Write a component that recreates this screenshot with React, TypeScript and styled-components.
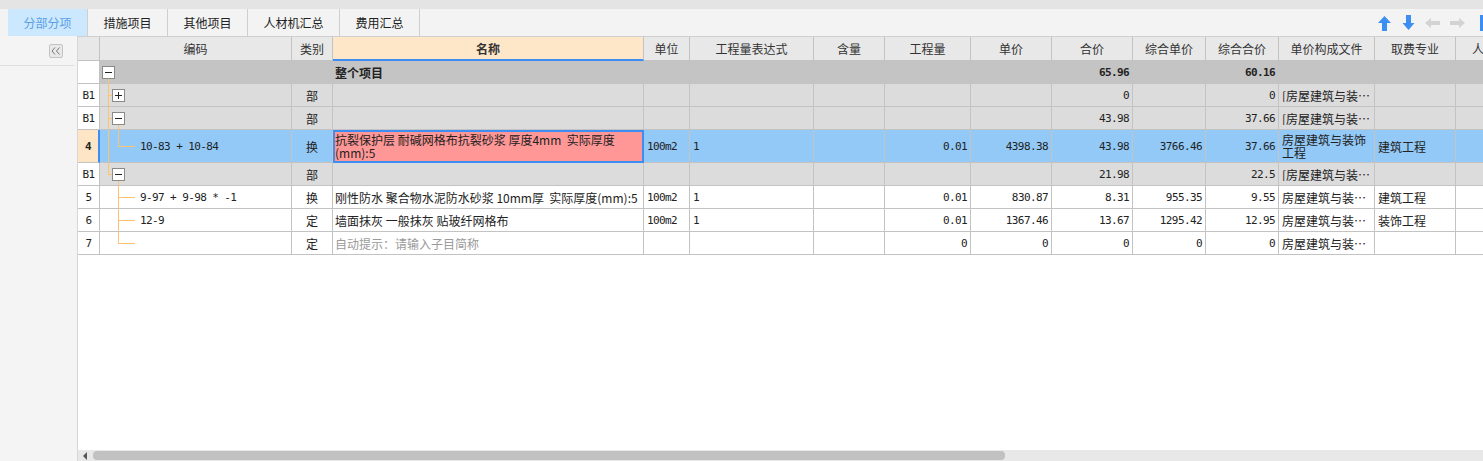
import React from 'react';
import styled, { createGlobalStyle, css } from 'styled-components';

const LINE = '#c3c3c3';
const BLUE = '#3d8ef2';
const TREE = '#ffc36e';

type Align = 'left' | 'center' | 'right';
type Kind = 'root' | 'group' | 'selected' | 'item';
type Seg = 'full' | 'top' | 'bottom';

interface Tree {
  l1?: Seg;
  box1?: '+' | '-';
  stub?: boolean;
  box2?: '+' | '-';
  l2?: Seg;
  leaf?: boolean;
}

interface RowData {
  kind: Kind;
  h: number;
  no: string;
  tree: Tree;
  code: string;
  type: string;
  name: string[];
  hint?: boolean;
  unit: string;
  expr: string;
  qty: string;
  price: string;
  total: string;
  uprice: string;
  utotal: string;
  file: string;
  major: string;
}

const COLUMNS = [
  { title: '', width: 22 },
  { title: '编码', width: 192 },
  { title: '类别', width: 41 },
  { title: '名称', width: 311, focus: true },
  { title: '单位', width: 46 },
  { title: '工程量表达式', width: 124 },
  { title: '含量', width: 71 },
  { title: '工程量', width: 86 },
  { title: '单价', width: 81 },
  { title: '合价', width: 81 },
  { title: '综合单价', width: 73 },
  { title: '综合合价', width: 73 },
  { title: '单价构成文件', width: 96 },
  { title: '取费专业', width: 81 },
  { title: '人工单价', width: 81 },
];

const TEMPLATE = COLUMNS.map(c => `${c.width}px`).join(' ');

const FILE = '房屋建筑与装饰工程';

const ROWS: RowData[] = [
  {
    kind: 'root', h: 23, no: '', tree: { box1: '-', l1: 'bottom' }, code: '', type: '',
    name: ['整个项目'], unit: '', expr: '', qty: '', price: '', total: '65.96', uprice: '', utotal: '60.16',
    file: '', major: '',
  },
  {
    kind: 'group', h: 23, no: 'B1', tree: { l1: 'full', stub: true, box2: '+' }, code: '', type: '部',
    name: [''], unit: '', expr: '', qty: '', price: '', total: '0', uprice: '', utotal: '0',
    file: `[${FILE}]`, major: '',
  },
  {
    kind: 'group', h: 23, no: 'B1', tree: { l1: 'full', stub: true, box2: '-', l2: 'bottom' }, code: '', type: '部',
    name: [''], unit: '', expr: '', qty: '', price: '', total: '43.98', uprice: '', utotal: '37.66',
    file: `[${FILE}]`, major: '',
  },
  {
    kind: 'selected', h: 33, no: '4', tree: { l1: 'full', l2: 'top', leaf: true }, code: '10-83 + 10-84', type: '换',
    name: ['抗裂保护层 耐碱网格布抗裂砂浆 厚度4mm  实际厚度', '(mm):5'], unit: '100m2', expr: '1', qty: '0.01',
    price: '4398.38', total: '43.98', uprice: '3766.46', utotal: '37.66', file: FILE, major: '建筑工程',
  },
  {
    kind: 'group', h: 23, no: 'B1', tree: { l1: 'top', stub: true, box2: '-', l2: 'bottom' }, code: '', type: '部',
    name: [''], unit: '', expr: '', qty: '', price: '', total: '21.98', uprice: '', utotal: '22.5',
    file: `[${FILE}]`, major: '',
  },
  {
    kind: 'item', h: 23, no: '5', tree: { l2: 'full', leaf: true }, code: '9-97 + 9-98 * -1', type: '换',
    name: ['刚性防水 聚合物水泥防水砂浆 10mm厚  实际厚度(mm):5'], unit: '100m2', expr: '1', qty: '0.01',
    price: '830.87', total: '8.31', uprice: '955.35', utotal: '9.55', file: FILE, major: '建筑工程',
  },
  {
    kind: 'item', h: 23, no: '6', tree: { l2: 'full', leaf: true }, code: '12-9', type: '定',
    name: ['墙面抹灰 一般抹灰 贴玻纤网格布'], unit: '100m2', expr: '1', qty: '0.01',
    price: '1367.46', total: '13.67', uprice: '1295.42', utotal: '12.95', file: FILE, major: '装饰工程',
  },
  {
    kind: 'item', h: 23, no: '7', tree: { l2: 'top', leaf: true }, code: '', type: '定',
    name: ['自动提示：请输入子目简称'], hint: true, unit: '', expr: '', qty: '0',
    price: '0', total: '0', uprice: '0', utotal: '0', file: FILE, major: '',
  },
];

const GlobalStyle = createGlobalStyle`
  html, body {
    margin: 0;
    padding: 0;
    background: #fff;
  }
  body {
    font-family: "Noto Sans CJK SC", "Noto Sans", sans-serif;
    font-size: 12px;
    color: #222;
  }
`;

const Shell = styled.div`
  width: 1483px;
  height: 461px;
  display: flex;
  flex-direction: column;
  overflow: hidden;
`;

const TopStrip = styled.div`
  height: 9px;
  flex-shrink: 0;
  background: #e4e4e4;
`;

const TabBar = styled.div`
  height: 27px;
  flex-shrink: 0;
  display: flex;
  align-items: stretch;
  padding-left: 8px;
  background: #f3f3f3;
  overflow: hidden;
`;

const Tab = styled.div<{ $active?: boolean; $w: number }>`
  width: ${p => p.$w}px;
  box-sizing: border-box;
  border-right: 1px solid #cfcfcf;
  display: flex;
  align-items: center;
  justify-content: center;
  font-size: 12px;
  color: ${p => (p.$active ? '#5a9fe6' : '#222')};
  background: ${p => (p.$active ? '#cce8ff' : 'transparent')};
`;

const ArrowGroup = styled.div`
  margin-left: auto;
  margin-right: -6px;
  display: flex;
  align-items: center;
  gap: 8px;
  flex-shrink: 0;
`;

const Body = styled.div`
  flex: 1;
  min-height: 0;
  display: flex;
`;

const SidePanel = styled.div`
  width: 78px;
  flex-shrink: 0;
  box-sizing: border-box;
  border-right: 1px solid #d6d6d6;
  background: #f4f4f4;
`;

const PanelHead = styled.div`
  height: 30px;
  box-sizing: border-box;
  margin-right: 3px;
  padding: 8px 11px 0 0;
  border-bottom: 1px solid #dedede;
  display: flex;
  justify-content: flex-end;
  align-items: flex-start;
`;

const CollapseButton = styled.div`
  width: 14px;
  height: 14px;
  box-sizing: border-box;
  border: 1px solid #c4c4c4;
  border-radius: 2px;
  background: #e9e9e9;
  display: flex;
  align-items: center;
  justify-content: center;
`;

const Main = styled.div`
  flex: 1;
  min-width: 0;
  display: flex;
  flex-direction: column;
`;

const GridViewport = styled.div`
  flex: 1;
  min-height: 0;
  overflow: hidden;
  background: #fff;
`;

const Grid = styled.div`
  width: max-content;
`;

const ROW_BG: Record<Kind, string> = {
  root: '#c4c4c4',
  group: '#dcdcdc',
  selected: '#92c9f7',
  item: '#fff',
};

const Row = styled.div<{ $h: number; $kind: Kind }>`
  display: grid;
  grid-template-columns: ${TEMPLATE};
  height: ${p => p.$h}px;
  background: ${p => ROW_BG[p.$kind]};
`;

const HeaderRow = styled.div`
  display: grid;
  grid-template-columns: ${TEMPLATE};
  height: 25px;
  box-sizing: border-box;
  border-top: 1px solid #cfcfcf;
  background: #e8e8e8;
`;

const HeaderCell = styled.div<{ $focus?: boolean }>`
  box-sizing: border-box;
  border-right: 1px solid ${LINE};
  border-bottom: ${p => (p.$focus ? `2px solid ${BLUE}` : `1px solid ${LINE}`)};
  background: ${p => (p.$focus ? '#fee6c8' : '#e8e8e8')};
  display: flex;
  align-items: center;
  justify-content: center;
  white-space: nowrap;
  overflow: hidden;
  font-size: 12px;
  font-weight: ${p => (p.$focus ? 700 : 400)};
  color: #333;
`;

const monoFont = css`
  font-family: "DejaVu Sans Mono", "Noto Sans CJK SC", monospace;
  font-size: 11px;
  letter-spacing: -0.6px;
`;

const Cell = styled.div<{ $align?: Align; $mono?: boolean; $bold?: boolean; $muted?: boolean; $wrap?: boolean }>`
  box-sizing: border-box;
  min-width: 0;
  border-right: 1px solid ${LINE};
  border-bottom: 1px solid ${LINE};
  padding: 0 3px;
  display: flex;
  align-items: center;
  justify-content: ${p => (p.$align === 'right' ? 'flex-end' : p.$align === 'center' ? 'center' : 'flex-start')};
  overflow: hidden;
  white-space: ${p => (p.$wrap ? 'normal' : 'pre')};
  line-height: 13px;
  font-size: 12px;
  font-weight: ${p => (p.$bold ? 700 : 400)};
  color: ${p => (p.$muted ? '#9a9a9a' : '#222')};
  ${p => p.$mono && monoFont}
`;

const RowNum = styled(Cell)<{ $selected?: boolean }>`
  padding: 0;
  background: ${p => (p.$selected ? '#fde5c6' : '#fff')};
  border-right: ${p => (p.$selected ? `2px solid ${BLUE}` : `1px solid ${LINE}`)};
`;

const CodeCell = styled(Cell)`
  padding: 0;
`;

const CodeText = styled.span`
  ${monoFont}
  white-space: pre;
`;

const NameCell = styled(Cell)<{ $focused?: boolean }>`
  padding: 0 2px;
  ${p =>
    p.$focused &&
    css`
      background: #ff9797;
      outline: 2px solid ${BLUE};
      outline-offset: -2px;
    `}
`;

const Ellip = styled.span`
  display: block;
  min-width: 0;
  overflow: hidden;
  text-overflow: ellipsis;
  white-space: nowrap;
`;

const Scrollbar = styled.div`
  height: 11px;
  flex-shrink: 0;
  display: flex;
  align-items: center;
  background: #e8e8e8;
`;

const ScrollThumb = styled.div`
  width: 912px;
  height: 9px;
  margin-left: 6px;
  border-radius: 4px;
  background: #c1c1c1;
`;

function UpArrow() {
  return (
    <svg width="16" height="16" viewBox="0 0 16 16">
      <path d="M1 8 L7.5 1 L14 8 L10 8 L10 16 L5 16 L5 8 Z" fill={BLUE} />
    </svg>
  );
}

function DownArrow() {
  return (
    <svg width="16" height="16" viewBox="0 0 16 16">
      <path d="M5 0 L10 0 L10 8 L13.5 8 L7.5 15 L1.5 8 L5 8 Z" fill={BLUE} />
    </svg>
  );
}

function SideArrow({ dir }: { dir: 'left' | 'right' }) {
  return (
    <svg width="16" height="16" viewBox="0 0 16 16" style={dir === 'right' ? { transform: 'scaleX(-1)' } : undefined}>
      <path d="M0 8 L6 3 L6 6 L15 6 L15 10 L6 10 L6 13 Z" fill="#d3d3d3" />
    </svg>
  );
}

function EdgeIcon() {
  return (
    <svg width="16" height="16" viewBox="0 0 16 16">
      <rect x="7" y="0" width="9" height="16" fill={BLUE} />
    </svg>
  );
}

function Expander({ x, c, sign }: { x: number; c: number; sign: '+' | '-' }) {
  return (
    <g>
      <rect x={x + 0.5} y={c - 5.5} width={12} height={12} fill="#fff" stroke="#8a8a8a" />
      <line x1={x + 3} x2={x + 10} y1={c + 0.5} y2={c + 0.5} stroke="#222" />
      {sign === '+' && <line x1={x + 6.5} x2={x + 6.5} y1={c - 3} y2={c + 4} stroke="#222" />}
    </g>
  );
}

function vertical(x: number, seg: Seg | undefined, c: number, h: number) {
  if (!seg) return null;
  const y1 = seg === 'bottom' ? c + 7 : 0;
  const y2 = seg === 'top' ? c + 1 : h;
  return <line x1={x} x2={x} y1={y1} y2={y2} stroke={TREE} />;
}

function TreeGutter({ h, tree }: { h: number; tree: Tree }) {
  const c = Math.floor(h / 2);
  return (
    <svg width="40" height={h} style={{ flexShrink: 0, display: 'block' }}>
      {vertical(8.5, tree.l1, c, h)}
      {vertical(18.5, tree.l2, c, h)}
      {tree.stub && <line x1={9} x2={12} y1={c + 0.5} y2={c + 0.5} stroke={TREE} />}
      {tree.leaf && <line x1={19} x2={35} y1={c + 0.5} y2={c + 0.5} stroke={TREE} />}
      {tree.box1 && <Expander x={2} c={c} sign={tree.box1} />}
      {tree.box2 && <Expander x={12} c={c} sign={tree.box2} />}
    </svg>
  );
}

export default function App() {
  const tabs = [
    { text: '分部分项', w: 80 },
    { text: '措施项目', w: 80 },
    { text: '其他项目', w: 80 },
    { text: '人材机汇总', w: 92 },
    { text: '费用汇总', w: 80 },
  ];

  return (
    <Shell>
      <GlobalStyle />
      <TopStrip />
      <TabBar>
        {tabs.map((t, i) => (
          <Tab key={t.text} $w={t.w} $active={i === 0}>
            {t.text}
          </Tab>
        ))}
        <ArrowGroup>
          <UpArrow />
          <DownArrow />
          <SideArrow dir="left" />
          <SideArrow dir="right" />
          <EdgeIcon />
        </ArrowGroup>
      </TabBar>
      <Body>
        <SidePanel>
          <PanelHead>
            <CollapseButton>
              <svg width="10" height="8" viewBox="0 0 10 8">
                <path d="M4 0.5 L1 4 L4 7.5 M8.5 0.5 L5.5 4 L8.5 7.5" fill="none" stroke="#777" />
              </svg>
            </CollapseButton>
          </PanelHead>
        </SidePanel>
        <Main>
          <GridViewport>
            <Grid>
              <HeaderRow>
                {COLUMNS.map((col, i) => (
                  <HeaderCell key={i} $focus={col.focus}>
                    {col.title}
                  </HeaderCell>
                ))}
              </HeaderRow>
              {ROWS.map((r, i) => {
                const selected = r.kind === 'selected';
                const root = r.kind === 'root';
                return (
                  <Row key={i} $h={r.h} $kind={r.kind}>
                    <RowNum $selected={selected} $bold={selected} $mono $align="center">
                      {r.no}
                    </RowNum>
                    <CodeCell>
                      <TreeGutter h={r.h - 1} tree={r.tree} />
                      <CodeText>{r.code}</CodeText>
                    </CodeCell>
                    <Cell $align="center">{r.type}</Cell>
                    <NameCell $focused={selected} $bold={root} $muted={r.hint}>
                      <span>
                        {r.name.map((line, j) => (
                          <React.Fragment key={j}>
                            {j > 0 && <br />}
                            {line}
                          </React.Fragment>
                        ))}
                      </span>
                    </NameCell>
                    <Cell $mono>{r.unit}</Cell>
                    <Cell $mono>{r.expr}</Cell>
                    <Cell />
                    <Cell $mono $align="right">{r.qty}</Cell>
                    <Cell $mono $align="right">{r.price}</Cell>
                    <Cell $mono $align="right" $bold={root}>{r.total}</Cell>
                    <Cell $mono $align="right">{r.uprice}</Cell>
                    <Cell $mono $align="right" $bold={root}>{r.utotal}</Cell>
                    {selected ? (
                      <Cell $wrap>{r.file}</Cell>
                    ) : (
                      <Cell>
                        <Ellip>{r.file}</Ellip>
                      </Cell>
                    )}
                    <Cell>{r.major}</Cell>
                    <Cell />
                  </Row>
                );
              })}
            </Grid>
          </GridViewport>
          <Scrollbar>
            <svg width="4" height="8" viewBox="0 0 4 8" style={{ marginLeft: 5 }}>
              <path d="M4 0 L0 4 L4 8 Z" fill="#555" />
            </svg>
            <ScrollThumb />
          </Scrollbar>
        </Main>
      </Body>
    </Shell>
  );
}
